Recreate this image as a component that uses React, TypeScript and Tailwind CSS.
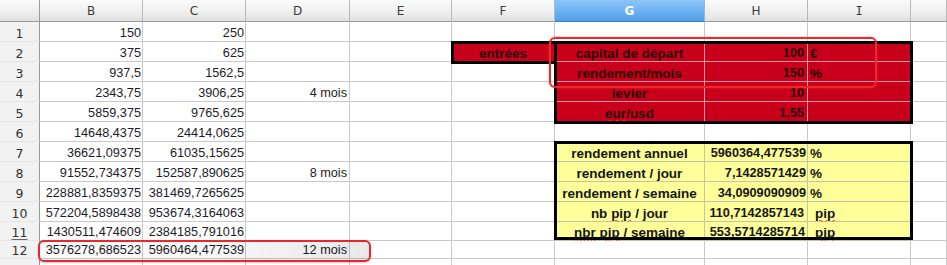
import { Fragment, type ReactNode } from 'react';

type Col = 'B' | 'C' | 'D' | 'E' | 'F' | 'G' | 'H' | 'I' | 'J';
type Tone = 'plain' | 'red' | 'yellow';
type Align = 'l' | 'c' | 'r';

interface CellDef {
  v: ReactNode;
  align?: Align;
  tone?: Tone;
  cls?: string;
}

interface RowDef {
  n: number;
  h: string;
  cells: Partial<Record<Col, CellDef>>;
}

const COLS: Col[] = ['B', 'C', 'D', 'E', 'F', 'G', 'H', 'I', 'J'];

// fautes soulignées par le correcteur
function Typo({ children }: { children: ReactNode }) {
  return (
    <span className="underline decoration-wavy decoration-[#ff2a2a] decoration-1 underline-offset-[1px]">
      {children}
    </span>
  );
}

const num = (v: string): CellDef => ({ v, align: 'r' });
const red = (v: ReactNode, align: Align = 'c', cls = ''): CellDef => ({ v, align, tone: 'red', cls });
const yel = (v: ReactNode, align: Align = 'c', cls = ''): CellDef => ({ v, align, tone: 'yellow', cls });

const ROWS: RowDef[] = [
  { n: 1, h: 'h-[20px]', cells: { B: num('150'), C: num('250') } },
  {
    n: 2,
    h: 'h-[20px]',
    cells: {
      B: num('375'),
      C: num('625'),
      F: red('entrées'),
      G: red('capital de départ'),
      H: red('100', 'r', 'pr-[3px]'),
      I: red('€', 'l', 'pl-[1px]'),
    },
  },
  {
    n: 3,
    h: 'h-[20px]',
    cells: {
      B: num('937,5'),
      C: num('1562,5'),
      G: red('rendement/mois'),
      H: red('150', 'r', 'pr-[3px]'),
      I: red('%', 'l', 'pl-[2px]'),
    },
  },
  {
    n: 4,
    h: 'h-[20px]',
    cells: {
      B: num('2343,75'),
      C: num('3906,25'),
      D: { v: '4 mois', align: 'r', cls: 'pr-[2px]' },
      G: red('levier'),
      H: red('10', 'r', 'pr-[3px]'),
      I: red(''),
    },
  },
  {
    n: 5,
    h: 'h-[20px]',
    cells: {
      B: num('5859,375'),
      C: num('9765,625'),
      G: red(
        <>
          <Typo>eur</Typo>/usd
        </>
      ),
      H: red('1,55', 'r', 'pr-[3px]'),
      I: red(''),
    },
  },
  { n: 6, h: 'h-[20px]', cells: { B: num('14648,4375'), C: num('24414,0625') } },
  {
    n: 7,
    h: 'h-[20px]',
    cells: {
      B: num('36621,09375'),
      C: num('61035,15625'),
      G: yel('rendement annuel'),
      H: yel('5960364,477539', 'r'),
      I: yel('%', 'l', 'pl-[2px]'),
    },
  },
  {
    n: 8,
    h: 'h-[20px]',
    cells: {
      B: num('91552,734375'),
      C: num('152587,890625'),
      D: { v: '8 mois', align: 'r', cls: 'pr-[2px]' },
      G: yel('rendement / jour'),
      H: yel('7,1428571429', 'r'),
      I: yel('%', 'l', 'pl-[2px]'),
    },
  },
  {
    n: 9,
    h: 'h-[20px]',
    cells: {
      B: num('228881,8359375'),
      C: num('381469,7265625'),
      G: yel('rendement / semaine'),
      H: yel('34,0909090909', 'r'),
      I: yel('%', 'l', 'pl-[2px]'),
    },
  },
  {
    n: 10,
    h: 'h-[20px]',
    cells: {
      B: num('572204,5898438'),
      C: num('953674,3164063'),
      G: yel(
        <>
          nb <Typo>pip</Typo> / jour
        </>
      ),
      H: yel('110,7142857143', 'r', 'pr-[3px]'),
      I: yel(<Typo>pip</Typo>, 'l', 'pl-[7px]'),
    },
  },
  {
    n: 11,
    h: 'h-[19px]',
    cells: {
      B: num('1430511,474609'),
      C: num('2384185,791016'),
      G: yel(
        <>
          <Typo>nbr</Typo> <Typo>pip</Typo> / semaine
        </>
      ),
      H: yel('553,5714285714', 'r', 'pr-[2px]'),
      I: yel(<Typo>pip</Typo>, 'l', 'pl-[7px]'),
    },
  },
  {
    n: 12,
    h: 'h-[18px]',
    cells: {
      B: num('3576278,686523'),
      C: num('5960464,477539'),
      D: { v: '12 mois', align: 'r', cls: 'pr-[2px]' },
    },
  },
  { n: 13, h: 'h-[20px]', cells: { B: num('8940696,716309'), C: num('14901161,19385') } },
];

const toneCls: Record<Tone, string> = {
  plain: 'bg-white border-[#c9c9c9] text-[#1c1c28]',
  red: 'bg-[#c8001c] border-[#e59aa4] text-[#2a0004] font-bold',
  yellow: 'bg-[#ffff99] border-[#c4c4ac] text-[#161616] font-bold',
};

const alignCls: Record<Align, string> = {
  l: 'justify-start pl-[2px]',
  c: 'justify-center',
  r: 'justify-end pr-[1px]',
};

function Cell({ def, h }: { def?: CellDef; h: string }) {
  const tone = def?.tone ?? 'plain';
  const align = def?.align ?? 'l';
  // libellés des blocs colorés un peu plus grands que les nombres
  const size = tone !== 'plain' && align !== 'r' ? 'text-[13.5px]' : 'text-[12.7px]';
  return (
    <div
      className={`${h} flex items-end whitespace-nowrap border-r border-b leading-[15px] ${size} ${toneCls[tone]} ${alignCls[align]} ${def?.cls ?? ''}`}
    >
      <span>{def?.v}</span>
    </div>
  );
}

function ColumnHeader({ name }: { name: Col }) {
  if (name === 'G') {
    return (
      <div className="h-[22px] flex items-center justify-center border-r border-b border-r-[#9cb8d8] border-b-[#3c7fc8] bg-gradient-to-b from-[#8cc5f7] via-[#6fb3f2] to-[#4f9de9] text-white font-bold font-['DejaVu_Sans',sans-serif] text-[12px]">
        G
      </div>
    );
  }
  return (
    <div
      className={`h-[22px] flex items-center justify-center border-r border-b border-r-[#b8b8b8] border-b-[#9a9a9a] bg-gradient-to-b from-[#fbfbfb] via-[#f1f1f1] to-[#e0e0e0] text-[#3a3a3a] text-[12px] ${
        name === 'I' ? "font-['DejaVu_Sans_Mono',monospace]" : "font-['DejaVu_Sans',sans-serif]"
      }`}
    >
      {name === 'J' ? '' : name}
    </div>
  );
}

export default function App() {
  return (
    <div className="relative w-[947px] h-[265px] overflow-hidden bg-white font-['Liberation_Sans',Arial,sans-serif]">
      <div className="grid grid-cols-[40px_103px_103px_104px_102px_103px_150px_103px_103px_1fr]">
        {/* en-tête des colonnes */}
        <div className="h-[22px] border-r border-b border-r-[#9a9a9a] border-b-[#9a9a9a] bg-gradient-to-b from-[#fbfbfb] via-[#f1f1f1] to-[#e0e0e0]" />
        {COLS.map((c) => (
          <ColumnHeader key={c} name={c} />
        ))}

        {ROWS.map((row) => (
          <Fragment key={row.n}>
            <div
              className={`${row.h} flex items-end justify-center border-r border-b border-r-[#9a9a9a] border-b-[#e6e6e6] bg-[#f2f2f2] text-[#333] text-[12.5px] leading-[15px] font-['DejaVu_Sans',sans-serif]`}
            >
              <span className={row.n === 11 ? 'underline underline-offset-2 decoration-[#666]' : ''}>{row.n}</span>
            </div>
            {COLS.map((c) => (
              <Cell key={c} def={row.cells[c]} h={row.h} />
            ))}
          </Fragment>
        ))}
      </div>

      {/* bordures épaisses des blocs */}
      <div className="absolute left-[451px] top-[41px] w-[106px] h-[23px] border-[3px] border-black" />
      <div className="absolute left-[554px] top-[41px] w-[359px] h-[83px] border-[3px] border-black" />
      <div className="absolute left-[554px] top-[141px] w-[359px] h-[99px] border-[3px] border-black" />

      {/* annotations */}
      <div className="absolute left-[549px] top-[37px] w-[328px] h-[51px] rounded-[6px] border-2 border-[#f02828] shadow-[0_0_2px_rgba(255,80,80,0.6)]" />
      <div className="absolute left-[38px] top-[240px] w-[333px] h-[22px] rounded-[6px] border-2 border-[#e8262e] bg-gradient-to-r from-black/[0.02] via-black/[0.03] to-black/[0.09] shadow-[0_1px_2px_rgba(0,0,0,0.2)]" />
    </div>
  );
}
